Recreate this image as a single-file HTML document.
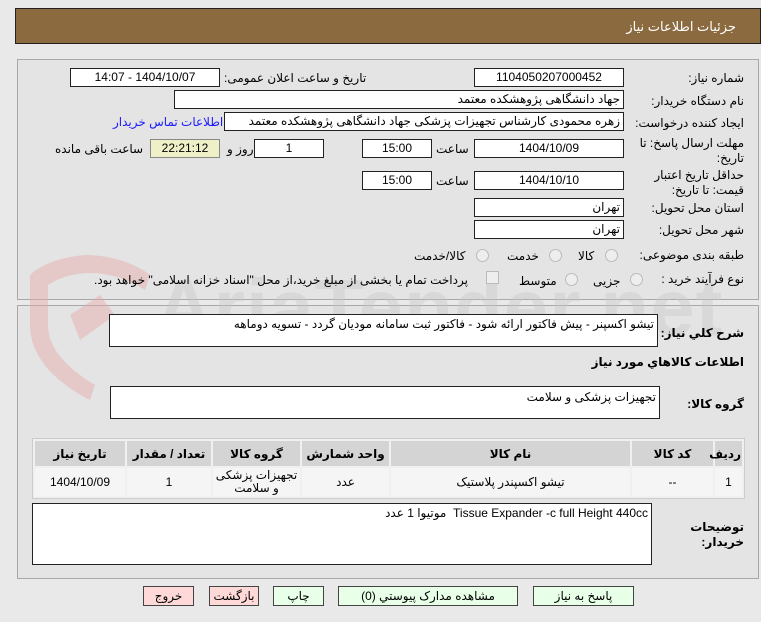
<!DOCTYPE html>
<html><head><meta charset="utf-8"><style>
body{margin:0;width:761px;height:622px;background:#e9e9e9;position:relative;overflow:hidden;font-family:Tahoma,"Liberation Sans","DejaVu Sans",sans-serif;font-size:12px;color:#000}
.a{position:absolute}
.hdr{left:15px;top:8px;width:744px;height:34px;background:#8b6a3f;border:1px solid #222}
.hdr span{position:absolute;right:24px;top:10px;color:#fff;font-size:13px}
.pan{border:1px solid #a8a8a8;background:#e4e4e4}
.in{position:absolute;background:#fff;border:1px solid #222;line-height:17px;direction:rtl;text-align:right;padding:0 3px;box-sizing:border-box;height:19px;white-space:nowrap;overflow:hidden}
.c{text-align:center}
.l{position:absolute;direction:rtl;white-space:nowrap}
.rad{position:absolute;width:11px;height:11px;border:1px solid #bbb;border-radius:50%;background:#eee}
table{border-collapse:separate;border-spacing:2px;position:absolute;left:32px;top:438px;width:713px;background:#f0f0f0;border:1px solid #ccc;direction:rtl;table-layout:fixed}
td{text-align:center;background:#f5f5f5;font-size:12px}
th{background:#d4d4d4;height:23px;font-weight:bold;font-size:12px}
.btn{position:absolute;top:586px;height:18px;border:1px solid #444;text-align:center;line-height:18px;direction:rtl;background:#e8ffe8}
.red{background:#ffd8d8}
</style></head><body>
<div class="a hdr"><span>جزئیات اطلاعات نیاز</span></div>
<div class="a pan" style="left:17px;top:59px;width:740px;height:239px"></div>
<div class="a pan" style="left:17px;top:305px;width:740px;height:272px"></div>
<!-- watermark -->
<svg class="a" style="left:20px;top:245px;opacity:.45" width="140" height="160" viewBox="0 0 140 160"><path d="M65 10 C40 12 20 20 10 30 L10 80 C10 120 50 145 70 155 L75 140 C50 125 28 105 28 80 L28 40 C40 32 55 28 70 28 C90 28 110 35 125 45 L130 30 C115 18 90 10 65 10Z" fill="#e7a9a9"/><path d="M50 70 L80 50 L95 70 L60 95Z" fill="#e7a9a9"/></svg>
<div class="a" style="left:155px;top:262px;font-size:80px;font-weight:bold;color:#c8c8c8;opacity:.4;font-family:'Liberation Sans',sans-serif;letter-spacing:1px">AriaTender.net</div>

<div class="l" style="right:17px;top:71px">شماره نیاز:</div>
<div class="in c" style="left:474px;top:68px;width:150px">1104050207000452</div>
<div class="l" style="left:224px;top:71px">تاریخ و ساعت اعلان عمومی:</div>
<div class="in c" style="left:70px;top:68px;width:150px">1404/10/07 - 14:07</div>

<div class="l" style="right:17px;top:94px">نام دستگاه خریدار:</div>
<div class="in" style="left:174px;top:90px;width:450px">جهاد دانشگاهی پژوهشکده معتمد</div>

<div class="l" style="right:17px;top:116px">ایجاد کننده درخواست:</div>
<div class="in" style="left:224px;top:112px;width:400px">زهره محمودی کارشناس تجهیزات پزشکی جهاد دانشگاهی پژوهشکده معتمد</div>
<div class="l" style="left:113px;top:115px;color:#1a1aff">اطلاعات تماس خریدار</div>

<div class="l" style="right:17px;top:136px;line-height:15px;text-align:right">مهلت ارسال پاسخ: تا<br>تاریخ:</div>
<div class="in c" style="left:474px;top:139px;width:150px">1404/10/09</div>
<div class="l" style="left:436px;top:142px">ساعت</div>
<div class="in c" style="left:362px;top:139px;width:70px">15:00</div>
<div class="in c" style="left:254px;top:139px;width:70px">1</div>
<div class="l" style="left:227px;top:142px">روز و</div>
<div class="in c" style="left:150px;top:139px;width:70px;background:#f0f0c8;border-color:#888">22:21:12</div>
<div class="l" style="left:55px;top:142px">ساعت باقی مانده</div>

<div class="l" style="right:17px;top:168px;line-height:15px;text-align:right">حداقل تاریخ اعتبار<br>قیمت: تا تاریخ:</div>
<div class="in c" style="left:474px;top:171px;width:150px">1404/10/10</div>
<div class="l" style="left:436px;top:174px">ساعت</div>
<div class="in c" style="left:362px;top:171px;width:70px">15:00</div>

<div class="l" style="right:17px;top:201px">استان محل تحویل:</div>
<div class="in" style="left:474px;top:198px;width:150px">تهران</div>
<div class="l" style="right:17px;top:223px">شهر محل تحویل:</div>
<div class="in" style="left:474px;top:220px;width:150px">تهران</div>

<div class="l" style="right:17px;top:248px">طبقه بندی موضوعی:</div>
<div class="rad" style="left:605px;top:249px"></div><div class="l" style="left:578px;top:249px">کالا</div>
<div class="rad" style="left:549px;top:249px"></div><div class="l" style="left:507px;top:249px">خدمت</div>
<div class="rad" style="left:476px;top:249px"></div><div class="l" style="left:414px;top:249px">کالا/خدمت</div>

<div class="l" style="right:17px;top:272px">نوع فرآیند خرید :</div>
<div class="rad" style="left:630px;top:273px"></div><div class="l" style="left:593px;top:274px">جزیی</div>
<div class="rad" style="left:565px;top:273px"></div><div class="l" style="left:519px;top:274px">متوسط</div>
<div class="a" style="left:486px;top:271px;width:11px;height:11px;border:1px solid #bbb;background:#eee"></div>
<div class="l" style="left:94px;top:273px">پرداخت تمام یا بخشی از مبلغ خرید،از محل "اسناد خزانه اسلامی" خواهد بود.</div>

<div class="l" style="right:17px;top:326px;font-weight:bold">شرح کلي نياز:</div>
<div class="in" style="left:109px;top:314px;width:549px;height:33px;line-height:18px">تیشو اکسپنر - پیش فاکتور ارائه شود - فاکتور ثبت سامانه مودیان گردد - تسویه دوماهه</div>
<div class="l" style="right:17px;top:355px;font-weight:bold">اطلاعات کالاهاي مورد نياز</div>
<div class="l" style="right:17px;top:397px;font-weight:bold">گروه کالا:</div>
<div class="in" style="left:110px;top:386px;width:550px;height:33px;line-height:20px">تجهیزات پزشکی و سلامت</div>

<table><colgroup><col style="width:27px"><col style="width:81px"><col style="width:239px"><col style="width:87px"><col style="width:87px"><col style="width:84px"><col></colgroup>
<tr><th>رديف</th><th>کد کالا</th><th>نام کالا</th><th>واحد شمارش</th><th>گروه کالا</th><th>تعداد / مقدار</th><th>تاریخ نیاز</th></tr>
<tr style="height:28px"><td>1</td><td>--</td><td>تیشو اکسپندر پلاستیک</td><td>عدد</td><td style="line-height:13px">تجهیزات پزشکی و سلامت</td><td>1</td><td>1404/10/09</td></tr></table>

<div class="l" style="right:17px;top:520px;font-weight:bold;line-height:15px;text-align:right">توضیحات<br>خریدار:</div>
<div class="in" style="left:32px;top:503px;width:620px;height:62px;line-height:18px">Tissue Expander -c full Height 440cc&nbsp; موتیوا 1 عدد</div>

<div class="btn" style="left:533px;width:99px">پاسخ به نیاز</div>
<div class="btn" style="left:338px;width:178px">مشاهده مدارک پیوستي (0)</div>
<div class="btn" style="left:273px;width:49px">چاپ</div>
<div class="btn red" style="left:209px;width:48px">بازگشت</div>
<div class="btn red" style="left:143px;width:49px">خروج</div>
</body></html>
